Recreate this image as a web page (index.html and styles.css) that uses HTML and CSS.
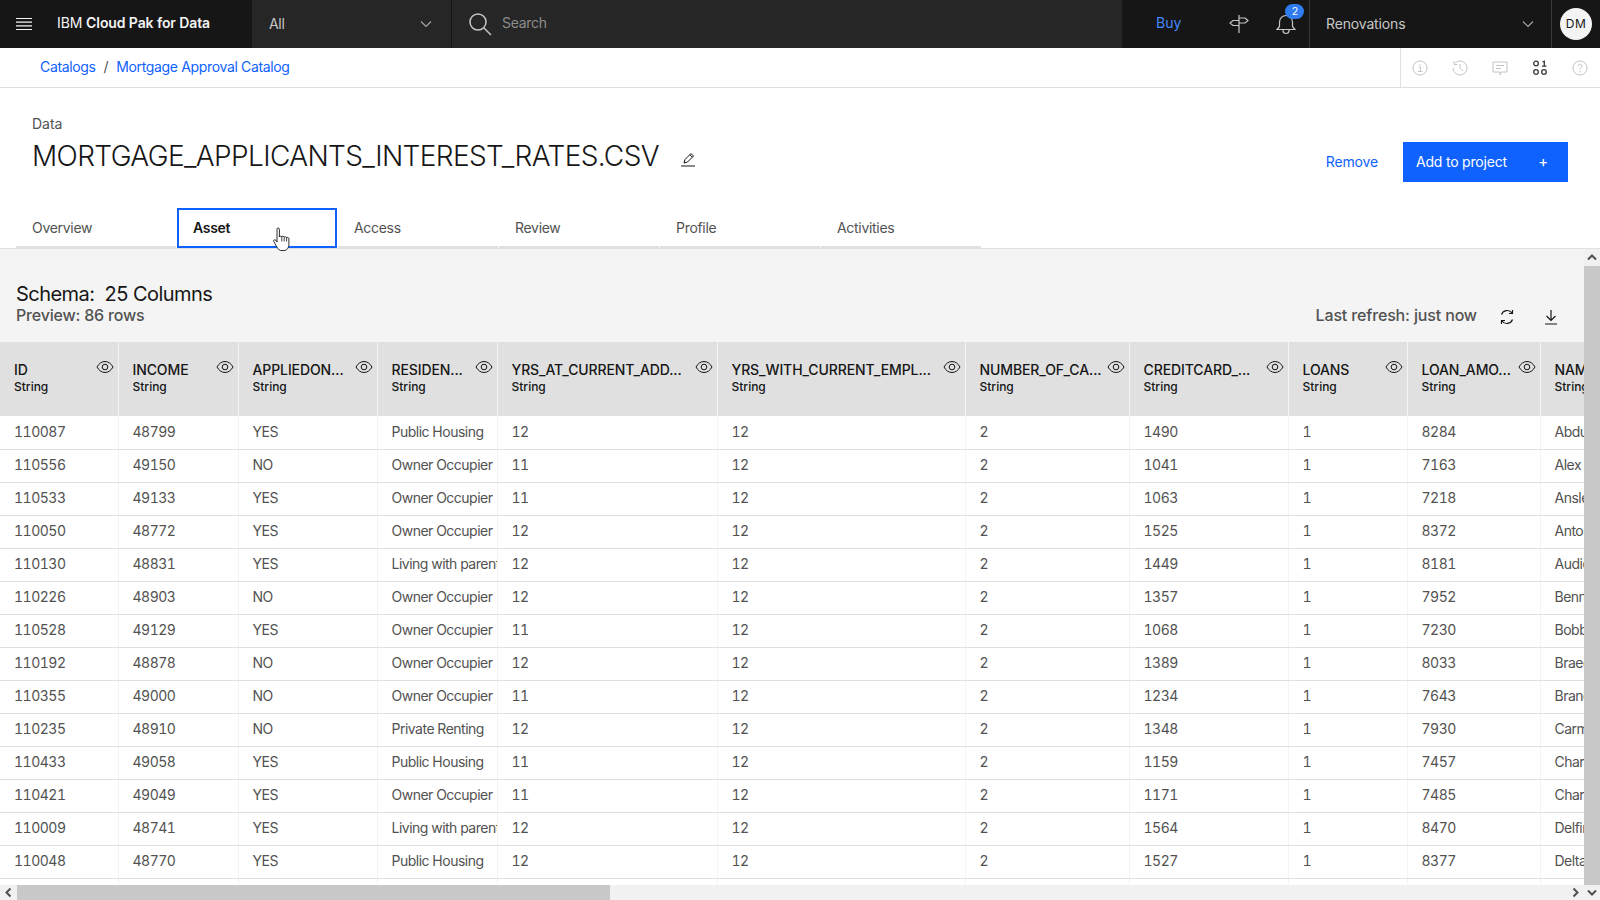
FILE: index.html
```html
<!DOCTYPE html>
<html lang="en">
<head>
  <meta charset="UTF-8">
  <title>MORTGAGE_APPLICANTS_INTEREST_RATES.CSV - IBM Cloud Pak for Data</title>
  <link rel="stylesheet" href="styles.css">
</head>
<body>

  <header class="topbar">
    <div class="brand">
      <svg class="menu-icon" width="16" height="14" viewBox="0 0 16 14"><path d="M0 1.500h16M0 5.200h16M0 8.900h16M0 12.500h16" stroke="#f4f4f4" stroke-width="1.200"/></svg>
      <span class="brand-name">IBM <b>Cloud Pak for Data</b></span>
    </div>
    <div class="scope">
      <span>All</span>
      <svg width="12" height="8" viewBox="0 0 12 8"><path d="M1 1.500l5 5 5-5" fill="none" stroke="#a8a8a8" stroke-width="1.100"/></svg>
    </div>
    <div class="search">
      <svg width="24" height="24" viewBox="0 0 24 24"><circle cx="10" cy="10" r="8" fill="none" stroke="#c6c6c6" stroke-width="1.500"/><path d="M16 16l7 7" stroke="#c6c6c6" stroke-width="1.500"/></svg>
      <span>Search</span>
    </div>
    <div class="top-actions">
      <a class="buy">Buy</a>
      <svg class="sign-icon" width="20" height="20" viewBox="0 0 20 20"><path d="M10 1v18M10 4h6l3 2.500-3 2.500H10M10 6.500H4L1 9l3 2.500h6" fill="none" stroke="#c6c6c6" stroke-width="1.200"/></svg>
      <div class="bell">
        <svg width="20" height="22" viewBox="0 0 20 22"><path d="M1 16.500l2.500-3V9a6.500 6.500 0 0 1 13 0v4.500l2.500 3zM7 16.500v1a3 3 0 0 0 6 0v-1" fill="none" stroke="#c6c6c6" stroke-width="1.200"/></svg>
        <span class="badge">2</span>
      </div>
    </div>
    <div class="account">
      <span>Renovations</span>
      <svg width="12" height="8" viewBox="0 0 12 8"><path d="M1 1.500l5 5 5-5" fill="none" stroke="#a8a8a8" stroke-width="1.100"/></svg>
    </div>
    <div class="user"><span class="avatar">DM</span></div>
  </header>

  <div class="crumbbar">
    <nav class="crumbs">
      <a>Catalogs</a><span class="sep">/</span><a>Mortgage Approval Catalog</a>
    </nav>
    <div class="side-icons">
      <svg width="16" height="16" viewBox="0 0 16 16"><circle cx="8" cy="8" r="7" fill="none" stroke="#c6c6c6"/><path d="M6.500 7h2v4.500M6 11.500h4.500M8 4v1.500" fill="none" stroke="#c6c6c6"/></svg>
      <svg width="16" height="16" viewBox="0 0 16 16"><path d="M3 3.100A7 7 0 1 1 1 8M2 1v3.500h3.500M8 4v4l3 3" fill="none" stroke="#c6c6c6"/></svg>
      <svg width="16" height="16" viewBox="0 0 16 16"><path d="M1 2h14v10H9l-1 3v-3H1zM4 5.500h8M4 8.500h5" fill="none" stroke="#c6c6c6"/></svg>
      <svg width="16" height="16" viewBox="0 0 16 16"><circle cx="4" cy="3.500" r="2.300" fill="none" stroke="#393939" stroke-width="1.300"/><circle cx="4" cy="12" r="2.300" fill="none" stroke="#393939" stroke-width="1.300"/><circle cx="12" cy="12" r="2.300" fill="none" stroke="#393939" stroke-width="1.300"/><path d="M10.500 2l1.800-.8v5M10 6.200h4.500" fill="none" stroke="#393939" stroke-width="1.300"/></svg>
      <svg width="16" height="16" viewBox="0 0 16 16"><circle cx="8" cy="8" r="7" fill="none" stroke="#c6c6c6"/><path d="M6 6.200a2 2 0 1 1 3 1.800c-.7.400-1 .8-1 1.600M8 11v1.300" fill="none" stroke="#c6c6c6"/></svg>
    </div>
  </div>

  <section class="asset-head">
    <div class="asset-title">
      <div class="asset-type">Data</div>
      <div class="title-row">
        <h1>MORTGAGE_APPLICANTS_INTEREST_RATES.CSV</h1>
        <svg class="edit-icon" width="16" height="16" viewBox="0 0 16 16"><path d="M1 15h14M4 12l1-3.500L11 2.500l2.500 2.500-6 6zM9.800 3.700l2.500 2.500" fill="none" stroke="#161616"/></svg>
      </div>
    </div>
    <div class="asset-actions">
      <a class="remove">Remove</a>
      <button class="add-btn">Add to project<span class="plus">+</span></button>
    </div>
  </section>

  <div class="tabs">
    <div class="tab">Overview</div>
    <div class="tab active">Asset
      <svg class="cursor" width="18" height="25" viewBox="0 0 18 25"><path d="M4 2.200c0-1.600 2.400-1.600 2.400 0V10c0-1 2.200-1.200 2.400 0 .2-1 2.300-1 2.400.3.300-.9 2.300-.8 2.400.5.200-.6 2.200-.6 2.300.9v6c0 3-1.700 5-4 5.800H7.500C5.500 23 4.500 21 3 18.500L.8 14.500c-.7-1.400 1-2.400 2-1.300L4 15z" fill="#fff" stroke="#161616" stroke-width=".9"/><path d="M8.800 10v4.500M11.200 10.500v4M13.600 11v3.500" fill="none" stroke="#161616" stroke-width=".8"/></svg>
    </div>
    <div class="tab">Access</div>
    <div class="tab">Review</div>
    <div class="tab">Profile</div>
    <div class="tab">Activities</div>
  </div>

  <main class="content">
    <div class="content-main">
      <div class="schema-bar">
        <div>
          <div class="schema-title">Schema:&nbsp; 25 Columns</div>
          <div class="schema-rows">Preview: 86 rows</div>
        </div>
        <div class="refresh">
          <span>Last refresh: just now</span>
          <svg class="refresh-icon" width="16" height="16" viewBox="0 0 16 16"><path d="M13.500 10.500A6 6 0 0 1 3 12M2.500 5.500A6 6 0 0 1 13 4M13.500 1v3.500H10M2.500 15v-3.500H6" fill="none" stroke="#161616" stroke-width="1.200"/></svg>
          <svg class="download-icon" width="16" height="16" viewBox="0 0 16 16"><path d="M8 1v10M3.500 7L8 11.500 12.500 7M2 15h12" fill="none" stroke="#161616" stroke-width="1.200"/></svg>
        </div>
      </div>

      <div class="table-wrap">
        <table class="data-table">
          <colgroup>
            <col class="c-id"><col class="c-income"><col class="c-applied"><col class="c-res"><col class="c-addr"><col class="c-empl"><col class="c-num"><col class="c-card"><col class="c-loans"><col class="c-amount"><col class="c-name">
          </colgroup>
          <thead>
            <tr>
              <th><div class="th-top"><span>ID</span><svg class="eye"><use href="#eye"/></svg></div><div class="th-type">String</div></th>
              <th><div class="th-top"><span>INCOME</span><svg class="eye"><use href="#eye"/></svg></div><div class="th-type">String</div></th>
              <th><div class="th-top"><span>APPLIEDON...</span><svg class="eye"><use href="#eye"/></svg></div><div class="th-type">String</div></th>
              <th><div class="th-top"><span>RESIDEN...</span><svg class="eye"><use href="#eye"/></svg></div><div class="th-type">String</div></th>
              <th><div class="th-top"><span>YRS_AT_CURRENT_ADD...</span><svg class="eye"><use href="#eye"/></svg></div><div class="th-type">String</div></th>
              <th><div class="th-top"><span>YRS_WITH_CURRENT_EMPL...</span><svg class="eye"><use href="#eye"/></svg></div><div class="th-type">String</div></th>
              <th><div class="th-top"><span>NUMBER_OF_CA...</span><svg class="eye"><use href="#eye"/></svg></div><div class="th-type">String</div></th>
              <th><div class="th-top"><span>CREDITCARD_...</span><svg class="eye"><use href="#eye"/></svg></div><div class="th-type">String</div></th>
              <th><div class="th-top"><span>LOANS</span><svg class="eye"><use href="#eye"/></svg></div><div class="th-type">String</div></th>
              <th><div class="th-top"><span>LOAN_AMO...</span><svg class="eye"><use href="#eye"/></svg></div><div class="th-type">String</div></th>
              <th><div class="th-top"><span>NAME</span></div><div class="th-type">String</div></th>
            </tr>
          </thead>
          <tbody>
            <tr><td>110087</td><td>48799</td><td>YES</td><td>Public Housing</td><td>12</td><td>12</td><td>2</td><td>1490</td><td>1</td><td>8284</td><td>Abdul</td></tr>
            <tr><td>110556</td><td>49150</td><td>NO</td><td>Owner Occupier</td><td>11</td><td>12</td><td>2</td><td>1041</td><td>1</td><td>7163</td><td>Alex</td></tr>
            <tr><td>110533</td><td>49133</td><td>YES</td><td>Owner Occupier</td><td>11</td><td>12</td><td>2</td><td>1063</td><td>1</td><td>7218</td><td>Ansley</td></tr>
            <tr><td>110050</td><td>48772</td><td>YES</td><td>Owner Occupier</td><td>12</td><td>12</td><td>2</td><td>1525</td><td>1</td><td>8372</td><td>Anton</td></tr>
            <tr><td>110130</td><td>48831</td><td>YES</td><td>Living with parents</td><td>12</td><td>12</td><td>2</td><td>1449</td><td>1</td><td>8181</td><td>Audie</td></tr>
            <tr><td>110226</td><td>48903</td><td>NO</td><td>Owner Occupier</td><td>12</td><td>12</td><td>2</td><td>1357</td><td>1</td><td>7952</td><td>Benny</td></tr>
            <tr><td>110528</td><td>49129</td><td>YES</td><td>Owner Occupier</td><td>11</td><td>12</td><td>2</td><td>1068</td><td>1</td><td>7230</td><td>Bobby</td></tr>
            <tr><td>110192</td><td>48878</td><td>NO</td><td>Owner Occupier</td><td>12</td><td>12</td><td>2</td><td>1389</td><td>1</td><td>8033</td><td>Braeden</td></tr>
            <tr><td>110355</td><td>49000</td><td>NO</td><td>Owner Occupier</td><td>11</td><td>12</td><td>2</td><td>1234</td><td>1</td><td>7643</td><td>Brandon</td></tr>
            <tr><td>110235</td><td>48910</td><td>NO</td><td>Private Renting</td><td>12</td><td>12</td><td>2</td><td>1348</td><td>1</td><td>7930</td><td>Carmen</td></tr>
            <tr><td>110433</td><td>49058</td><td>YES</td><td>Public Housing</td><td>11</td><td>12</td><td>2</td><td>1159</td><td>1</td><td>7457</td><td>Charles</td></tr>
            <tr><td>110421</td><td>49049</td><td>YES</td><td>Owner Occupier</td><td>11</td><td>12</td><td>2</td><td>1171</td><td>1</td><td>7485</td><td>Charlie</td></tr>
            <tr><td>110009</td><td>48741</td><td>YES</td><td>Living with parents</td><td>12</td><td>12</td><td>2</td><td>1564</td><td>1</td><td>8470</td><td>Delfina</td></tr>
            <tr><td>110048</td><td>48770</td><td>YES</td><td>Public Housing</td><td>12</td><td>12</td><td>2</td><td>1527</td><td>1</td><td>8377</td><td>Delta</td></tr>
            <tr><td></td><td></td><td></td><td></td><td></td><td></td><td></td><td></td><td></td><td></td><td></td></tr>
          </tbody>
        </table>
      </div>

      <div class="hscroll">
        <svg class="arrow" width="17" height="15" viewBox="0 0 17 15"><path d="M10.500 3.500L6.500 7.500l4 4" fill="none" stroke="#505050" stroke-width="2"/></svg>
        <div class="hthumb"></div>
        <svg class="arrow end" width="17" height="15" viewBox="0 0 17 15"><path d="M6.500 3.500l4 4-4 4" fill="none" stroke="#505050" stroke-width="2"/></svg>
      </div>
    </div>

    <div class="vscroll">
      <svg class="arrow" width="16" height="17" viewBox="0 0 16 17"><path d="M4 10.500l4-4 4 4" fill="none" stroke="#505050" stroke-width="2"/></svg>
      <div class="vthumb"></div>
      <svg class="arrow" width="16" height="15" viewBox="0 0 16 15"><path d="M4 5.500l4 4 4-4" fill="none" stroke="#505050" stroke-width="2"/></svg>
    </div>
  </main>

  <!-- shared eye icon -->
  <svg class="defs" width="0" height="0">
    <symbol id="eye" viewBox="0 0 18 14">
      <path d="M1 7c2-3.600 4.800-5.500 8-5.500s6 1.900 8 5.500c-2 3.600-4.800 5.500-8 5.500S3 10.600 1 7z" fill="none" stroke="#161616"/>
      <circle cx="9" cy="7" r="2.800" fill="none" stroke="#161616"/>
    </symbol>
  </svg>

</body>
</html>
```

FILE: styles.css
```css
* {
  box-sizing: border-box;
}
body {
  margin: 0;
  height: 900px;
  overflow: hidden;
  display: flex;
  flex-direction: column;
  background-color: #fff;
  color: #161616;
  font-family: Inter, "Liberation Sans", sans-serif;
  font-size: 14px;
  letter-spacing: -0.3px;
}

/* Top bar */
.topbar {
  display: flex;
  flex: none;
  height: 48px;
  background-color: #161616;
  color: #f4f4f4;
}
.brand {
  width: 252px;
  display: flex;
  align-items: center;
  padding-left: 16px;
}
.menu-icon {
  margin-right: 25px;
}
.brand-name {
  margin-bottom: 3px;
  font-size: 14px;
  letter-spacing: -0.1px;
}
.brand-name b {
  font-weight: 600;
}
.scope {
  width: 200px;
  display: flex;
  align-items: center;
  justify-content: space-between;
  padding: 0 19px 0 17px;
  background-color: #262626;
  border-right: 1px solid #161616;
  color: #c6c6c6;
}
.scope span,
.account span {
  margin-bottom: 2px;
}
.search {
  width: 670px;
  display: flex;
  align-items: center;
  gap: 10px;
  padding-left: 16px;
  background-color: #262626;
  color: #8d8d8d;
}
.search span {
  margin-bottom: 3px;
}
.top-actions {
  width: 188px;
  display: flex;
  align-items: center;
  border-right: 1px solid #393939;
  padding-left: 34px;
}
.buy {
  color: #4589ff;
  margin: 0 48px 3px 0;
  letter-spacing: 0;
}
.sign-icon {
  margin-right: 27px;
}
.bell {
  position: relative;
  display: flex;
}
.badge {
  position: absolute;
  top: -9px;
  left: 9px;
  width: 19px;
  height: 15px;
  border-radius: 8px;
  background-color: #2f7bf0;
  color: #fff;
  font-size: 10.5px;
  line-height: 15px;
  text-align: center;
}
.account {
  width: 242px;
  display: flex;
  align-items: center;
  justify-content: space-between;
  padding: 0 17px 0 16px;
  border-right: 1px solid #393939;
  color: #c6c6c6;
  letter-spacing: -0.15px;
}
.user {
  flex: 1;
  display: flex;
  align-items: center;
  justify-content: center;
}
.avatar {
  width: 32px;
  height: 32px;
  border-radius: 50%;
  background-color: #f4f4f4;
  color: #161616;
  font-size: 12px;
  line-height: 32px;
  letter-spacing: 0.4px;
  text-align: center;
}

/* Breadcrumb */
.crumbbar {
  flex: none;
  height: 40px;
  display: flex;
  justify-content: space-between;
  border-bottom: 1px solid #e0e0e0;
}
.crumbs {
  padding: 10px 0 0 40px;
  color: #0f62fe;
  letter-spacing: -0.35px;
}
.sep {
  color: #525252;
  margin: 0 8px;
}
.side-icons {
  width: 200px;
  display: flex;
  align-items: center;
  justify-content: space-between;
  padding: 0 12px 0 11px;
  border-left: 1px solid #e0e0e0;
}

/* Asset header */
.asset-head {
  flex: none;
  height: 120px;
  display: flex;
  justify-content: space-between;
  padding: 0 32px;
}
.asset-type {
  margin-top: 27px;
  color: #525252;
  font-size: 14px;
  letter-spacing: 0;
}
.title-row {
  display: flex;
  align-items: center;
  gap: 21px;
  margin-top: 6px;
}
h1 {
  margin: 0;
  font-size: 28px;
  font-weight: 300;
  line-height: 36px;
  letter-spacing: -0.62px;
}
.edit-icon {
  margin-top: 5px;
}
.asset-actions {
  display: flex;
  align-items: flex-start;
  padding-top: 54px;
}
.remove {
  margin: 11px 25px 0 0;
  color: #0f62fe;
  letter-spacing: -0.15px;
}
.add-btn {
  width: 165px;
  height: 40px;
  display: flex;
  align-items: center;
  justify-content: space-between;
  padding: 0 20px 2px 13px;
  border: none;
  background-color: #0f62fe;
  color: #fff;
  font-family: inherit;
  font-size: 14px;
  letter-spacing: -0.2px;
}
.plus {
  font-size: 15px;
}

/* Tabs */
.tabs {
  flex: none;
  height: 41px;
  display: flex;
  padding-left: 16px;
  border-bottom: 1px solid #e0e0e0;
}
.tab {
  position: relative;
  width: 160px;
  margin-right: 1px;
  padding: 11px 0 0 16px;
  border-bottom: 2px solid #e0e0e0;
  color: #525252;
}
.tab.active {
  border: 2px solid #0f62fe;
  padding: 9px 0 0 14px;
  font-weight: 600;
  color: #161616;
}
.cursor {
  position: absolute;
  left: 94px;
  top: 17px;
}

/* Schema + table */
.content {
  flex: 1;
  min-height: 0;
  display: flex;
  background-color: #f4f4f4;
}
.content-main {
  width: 1584px;
  display: flex;
  flex-direction: column;
}
.schema-bar {
  flex: none;
  height: 93px;
  display: flex;
  justify-content: space-between;
  padding: 34px 25px 0 16px;
}
.schema-title {
  font-size: 20px;
  line-height: 22px;
  letter-spacing: -0.55px;
}
.schema-rows {
  font-size: 16px;
  font-weight: 500;
  line-height: 20px;
  color: #525252;
  letter-spacing: -0.2px;
}
.refresh {
  display: flex;
  align-items: center;
  height: 20px;
  margin-top: 22px;
  font-size: 16px;
  font-weight: 500;
  color: #525252;
  letter-spacing: -0.15px;
}
.refresh-icon {
  margin: 4px 0 0 22px;
}
.download-icon {
  margin: 4px 0 0 28px;
}
.table-wrap {
  flex: 1;
  min-height: 0;
  overflow: hidden;
}
.data-table {
  table-layout: fixed;
  width: 1661px;
  border-collapse: collapse;
  background-color: #fff;
}
.c-id { width: 118px; }
.c-income { width: 120px; }
.c-applied { width: 139px; }
.c-res { width: 120px; }
.c-addr { width: 220px; }
.c-empl { width: 248px; }
.c-num { width: 164px; }
.c-card { width: 159px; }
.c-loans { width: 119px; }
.c-amount { width: 133px; }
.c-name { width: 121px; }

.data-table th {
  height: 74px;
  padding: 19px 4px 0 14px;
  vertical-align: top;
  text-align: left;
  background-color: #e0e0e0;
  border-left: 1px solid #f4f4f4;
}
.data-table th:first-child,
.data-table td:first-child {
  padding-left: 14px;
  border-left: none;
}
.th-top {
  display: flex;
  justify-content: space-between;
  font-size: 14px;
  font-weight: 500;
  line-height: 18px;
  white-space: nowrap;
  letter-spacing: -0.1px;
}
.th-type {
  font-size: 12px;
  font-weight: 500;
  line-height: 16px;
  letter-spacing: 0;
}
.eye {
  width: 18px;
  height: 14px;
  margin-top: -1px;
  flex: none;
}
.data-table td {
  height: 33px;
  padding: 0 0 2px 14px;
  overflow: hidden;
  white-space: nowrap;
  color: #525252;
  border-left: 1px solid #f4f4f4;
  border-bottom: 1px solid #e0e0e0;
  font-variant-numeric: tabular-nums;
  letter-spacing: -0.5px;
}
.defs {
  position: absolute;
}

/* Scrollbars */
.hscroll {
  flex: none;
  height: 15px;
  display: flex;
  background-color: #f1f1f1;
}
.hthumb {
  width: 593px;
  background-color: #c8c8c8;
}
.hscroll .end {
  margin-left: auto;
}
.vscroll {
  width: 16px;
  display: flex;
  flex-direction: column;
  background-color: #f1f1f1;
}
.vthumb {
  flex: 1;
  background-color: #c8c8c8;
}
.arrow {
  flex: none;
}
```
